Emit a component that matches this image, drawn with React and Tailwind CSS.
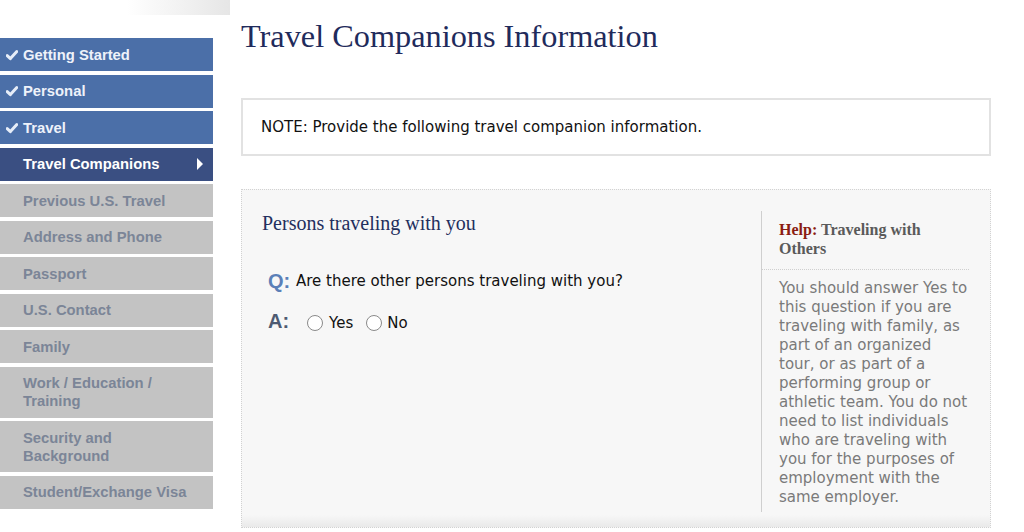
import { useState } from 'react'

const steps = [
  { label: 'Getting Started', state: 'done' },
  { label: 'Personal', state: 'done' },
  { label: 'Travel', state: 'done' },
  { label: 'Travel Companions', state: 'active' },
  { label: 'Previous U.S. Travel', state: 'todo' },
  { label: 'Address and Phone', state: 'todo' },
  { label: 'Passport', state: 'todo' },
  { label: 'U.S. Contact', state: 'todo' },
  { label: 'Family', state: 'todo' },
  { label: 'Work / Education / Training', state: 'todo', tall: true },
  { label: 'Security and Background', state: 'todo', tall: true },
  { label: 'Student/Exchange Visa', state: 'todo' },
]

const Check = () => (
  <svg viewBox="0 0 12 12" className="w-[12px] h-[12px] shrink-0">
    <path d="M1.2 6.6 L4.4 9.6 L10.8 2.6" fill="none" stroke="#e6edf8" strokeWidth="3" strokeLinecap="round" strokeLinejoin="round" />
  </svg>
)

const StepItem = ({ step }) => {
  const base = 'relative flex items-center w-[213px] pr-[10px] font-bold text-[14.8px] leading-[18px]'
  const height = step.tall ? 'h-[51px]' : 'h-[33px]'
  if (step.state === 'done') {
    return (
      <div className={`${base} ${height} bg-[#4b6fa8] text-[#eef2fa]`}>
        <span className="w-[23px] flex justify-center pl-[1px]"><Check /></span>
        {step.label}
      </div>
    )
  }
  if (step.state === 'active') {
    return (
      <div className={`${base} ${height} bg-[#3a4f82] text-white`}>
        <span className="w-[23px]" />
        {step.label}
        <span className="absolute right-[10px] top-1/2 -translate-y-1/2 w-0 h-0 border-y-[6px] border-y-transparent border-l-[6px] border-l-white" />
      </div>
    )
  }
  return (
    <div className={`${base} ${height} bg-[#c3c3c3] text-[#7b8597]`}>
      <span className="w-[23px] shrink-0" />
      <span className={step.tall ? 'w-[140px]' : ''}>{step.label}</span>
    </div>
  )
}

const Radio = ({ checked, onClick }) => (
  <span
    onClick={onClick}
    className="w-[16px] h-[16px] rounded-full border border-[#8a8a8a] bg-white inline-flex items-center justify-center cursor-pointer"
  >
    {checked && <span className="w-[8px] h-[8px] rounded-full bg-[#3a6fd8]" />}
  </span>
)

export default function App() {
  const [answer, setAnswer] = useState(null)

  return (
    <div className="w-[1024px] h-[532px] bg-white flex overflow-hidden" style={{ fontFamily: '"DejaVu Sans", Verdana, sans-serif' }}>
      {/* Sidebar */}
      <div className="w-[230px] shrink-0 flex flex-col" style={{ fontFamily: '"Liberation Sans", Arial, sans-serif' }}>
        <div className="ml-[127px] w-[103px] h-[15px] bg-gradient-to-r from-white to-[#e6e6e6]" />
        <div className="mt-[23px] flex flex-col gap-[3.5px]">
          {steps.map((s) => (
            <StepItem key={s.label} step={s} />
          ))}
        </div>
      </div>

      {/* Main */}
      <div className="ml-[11px] w-[750px] flex flex-col">
        <h1 className="mt-[19px] text-[32.3px] leading-[34px] text-[#1f2b5c]" style={{ fontFamily: '"Liberation Serif", "Times New Roman", serif' }}>
          Travel Companions Information
        </h1>

        <div className="mt-[45px] h-[58px] border-2 border-[#e2e2e2] bg-white flex items-center pl-[18px] text-[15px] text-[#111]">
          NOTE: Provide the following travel companion information.
        </div>

        <div className="mt-[33px] border border-dotted border-[#d2d2d2] bg-[#f7f7f7] flex flex-col">
          <div className="flex">
            <div className="flex-1 pl-[20px] pt-[22px]">
              <h2 className="text-[20px] leading-[22px] text-[#232f5e]" style={{ fontFamily: '"Liberation Serif", "Times New Roman", serif' }}>
                Persons traveling with you
              </h2>
              <div className="mt-[32px] ml-[6px] flex items-center">
                <span className="w-[28px] font-bold text-[20px] text-[#5b80b8]" style={{ fontFamily: '"Liberation Sans", Arial, sans-serif' }}>Q:</span>
                <span className="text-[15px] text-[#111]">Are there other persons traveling with you?</span>
              </div>
              <div className="mt-[10px] ml-[6px] flex items-center">
                <span className="w-[39px] font-bold text-[20px] text-[#4d5a72]" style={{ fontFamily: '"Liberation Sans", Arial, sans-serif' }}>A:</span>
                <label className="flex items-center gap-[6px] text-[15px] text-[#111] mt-[4px]">
                  <Radio checked={answer === 'Y'} onClick={() => setAnswer('Y')} />
                  Yes
                </label>
                <label className="ml-[13px] flex items-center gap-[5px] text-[15px] text-[#111] mt-[4px]">
                  <Radio checked={answer === 'N'} onClick={() => setAnswer('N')} />
                  No
                </label>
              </div>
            </div>

            {/* Help */}
            <div className="w-[208px] mr-[21px] mt-[21px] mb-[3px] border-l border-[#cfcfcf]">
              <h3 className="pl-[17px] pt-[9px] pb-[11px] border-b border-dotted border-[#cfcfcf] text-[16px] leading-[19px] font-bold text-[#5a5a5a]" style={{ fontFamily: '"Liberation Serif", "Times New Roman", serif' }}>
                <span className="text-[#8b1c12]">Help:</span> <span>Traveling with</span>
                <br />
                <span>Others</span>
              </h3>
              <p className="pl-[17px] pt-[9px] pb-[5px] text-[15px] leading-[19px] text-[#7a7a7a]">
                You should answer Yes to this question if you are traveling with family, as part of an organized tour, or as part of a performing group or athletic team. You do not need to list individuals who are traveling with you for the purposes of employment with the same employer.
              </p>
            </div>
          </div>
          <div className="h-[12px] bg-gradient-to-b from-[#f7f7f7] to-[#e9e9e9]" />
        </div>
      </div>
    </div>
  )
}
